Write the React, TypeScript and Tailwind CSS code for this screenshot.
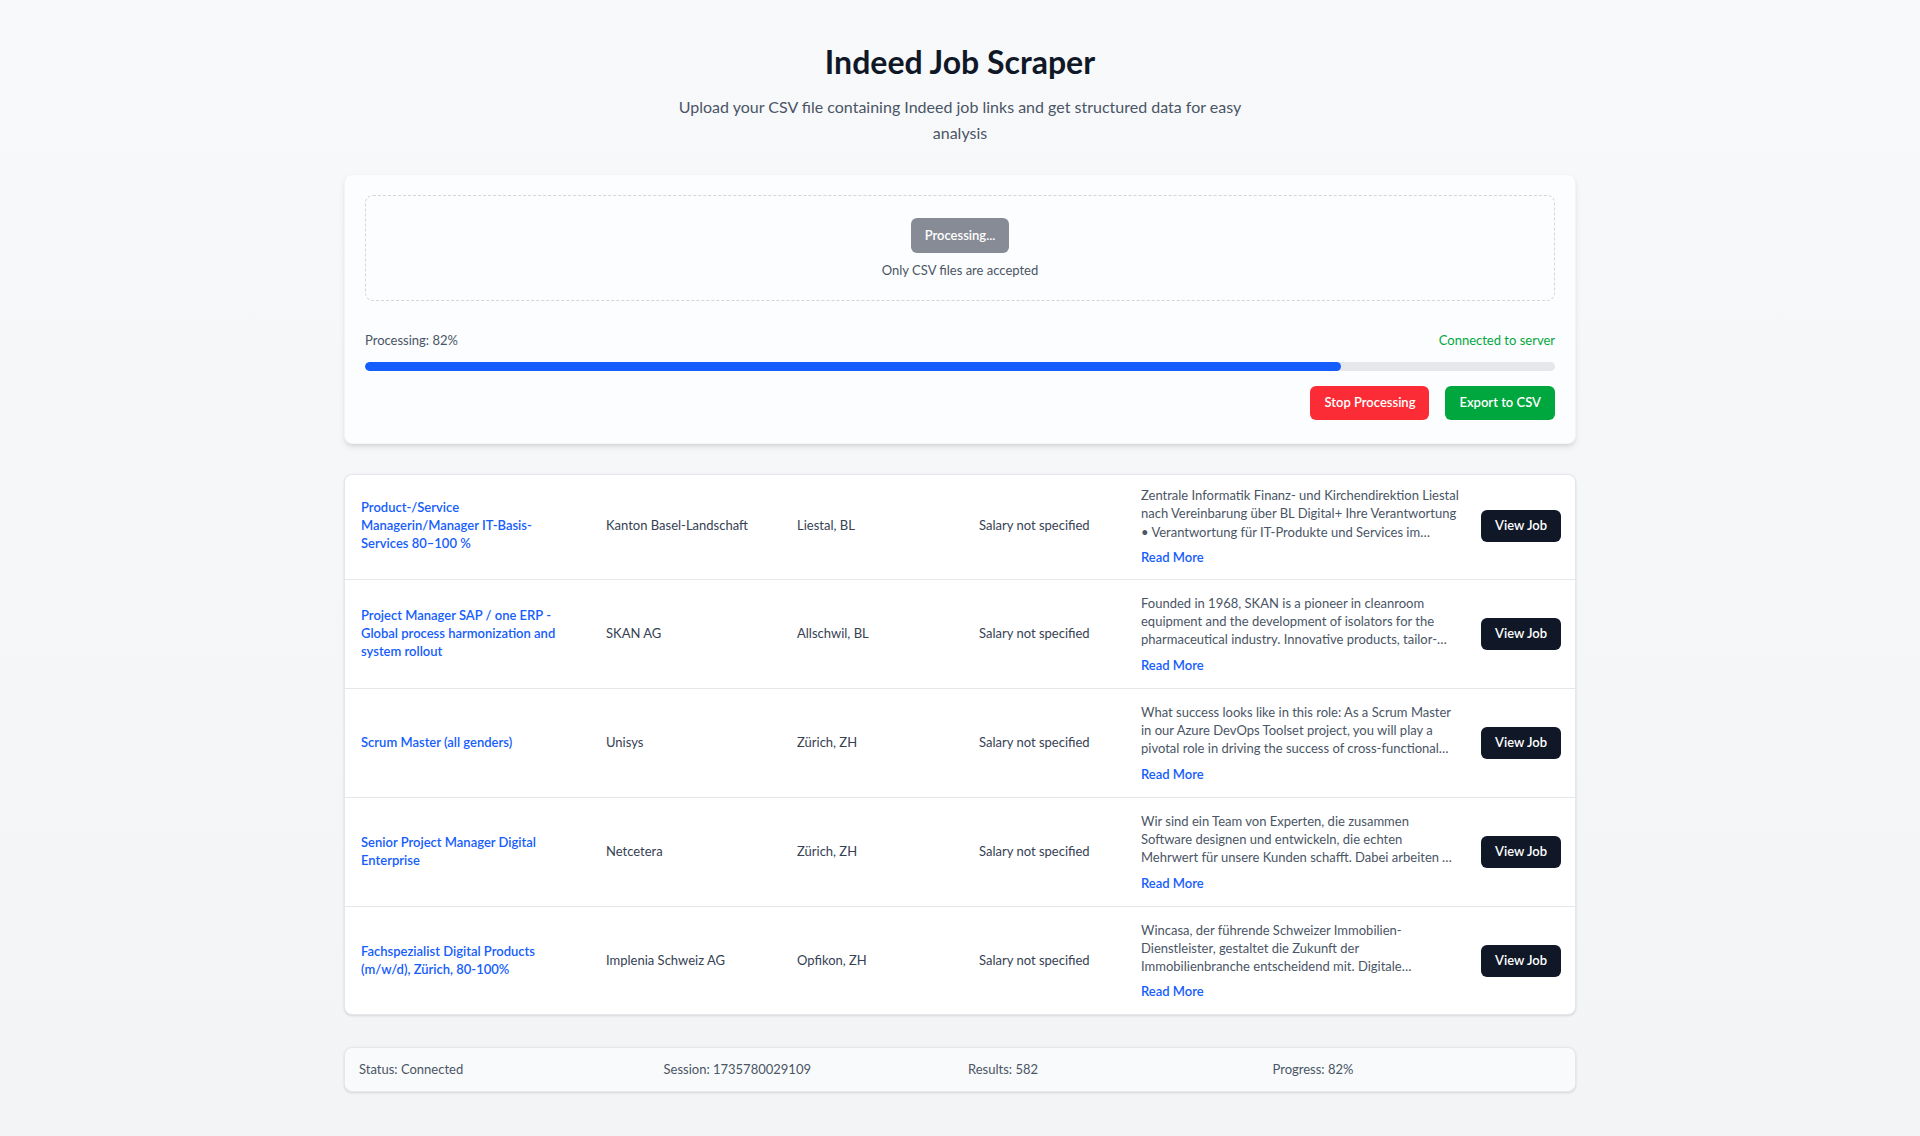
type Job = {
  title: string;
  company: string;
  location: string;
  salary: string;
  description: string;
};

const jobs: Job[] = [
  {
    title: 'Product-/Service Managerin/Manager IT-Basis-Services 80–100 %',
    company: 'Kanton Basel-Landschaft',
    location: 'Liestal, BL',
    salary: 'Salary not specified',
    description:
      'Zentrale Informatik Finanz- und Kirchendirektion Liestal nach Vereinbarung über BL Digital+ Ihre Verantwortung • Verantwortung für IT-Produkte und Services im Bereich Basis-Services sowie Weiterentwicklung der Angebote.',
  },
  {
    title: 'Project Manager SAP / one ERP - Global process harmonization and system rollout',
    company: 'SKAN AG',
    location: 'Allschwil, BL',
    salary: 'Salary not specified',
    description:
      'Founded in 1968, SKAN is a pioneer in cleanroom equipment and the development of isolators for the pharmaceutical industry. Innovative products, tailor-made solutions and a strong team spirit are what drive us.',
  },
  {
    title: 'Scrum Master (all genders)',
    company: 'Unisys',
    location: 'Zürich, ZH',
    salary: 'Salary not specified',
    description:
      'What success looks like in this role: As a Scrum Master in our Azure DevOps Toolset project, you will play a pivotal role in driving the success of cross-functional teams and agile delivery.',
  },
  {
    title: 'Senior Project Manager Digital Enterprise',
    company: 'Netcetera',
    location: 'Zürich, ZH',
    salary: 'Salary not specified',
    description:
      'Wir sind ein Team von Experten, die zusammen Software designen und entwickeln, die echten Mehrwert für unsere Kunden schafft. Dabei arbeiten wir eng mit unseren Partnern zusammen.',
  },
  {
    title: 'Fachspezialist Digital Products (m/w/d), Zürich, 80-100%',
    company: 'Implenia Schweiz AG',
    location: 'Opfikon, ZH',
    salary: 'Salary not specified',
    description:
      'Wincasa, der führende Schweizer Immobilien-Dienstleister, gestaltet die Zukunft der Immobilienbranche entscheidend mit. Digitale Transformationsprojekte stehen dabei im Zentrum.',
  },
];

const progress = 82;

function JobRow({ job, first }: { job: Job; first: boolean }) {
  return (
    <div
      className={
        first
          ? 'flex items-center px-4 pt-[11px] pb-[13px]'
          : 'flex items-center px-4 pt-[14px] pb-[14px] border-t border-gray-200'
      }
    >
      <div className="w-[245px] shrink-0 pr-[40px]">
        <a className="block text-[13px] leading-[1.38] font-semibold text-blue-600">{job.title}</a>
      </div>
      <div className="w-[191px] shrink-0 text-[13px] text-gray-700">{job.company}</div>
      <div className="w-[182px] shrink-0 text-[13px] text-gray-700">{job.location}</div>
      <div className="w-[162px] shrink-0 text-[13px] text-gray-700">{job.salary}</div>
      <div className="w-[340px] shrink-0">
        <p className="w-[321px] text-[13px] leading-[18.3px] text-gray-600 line-clamp-3">{job.description}</p>
        <button className="mt-[7px] block text-[13px] leading-[18px] font-semibold text-blue-600">
          Read More
        </button>
      </div>
      <div className="w-[80px] shrink-0">
        <button className="w-[80px] h-8 rounded-md bg-gray-900 text-white text-[13px] font-semibold">
          View Job
        </button>
      </div>
    </div>
  );
}

export default function App() {
  return (
    <div className="min-h-screen bg-gradient-to-b from-[#f8f9fb] to-[#f3f4f6] font-['Lato','Noto_Sans',sans-serif] pb-10">
      <div className="max-w-7xl mx-auto px-6 pt-[42px]">
        <header className="text-center">
          <h1 className="text-[32px] leading-[40px] font-bold text-gray-900">Indeed Job Scraper</h1>
          <p className="mt-3 max-w-xl mx-auto text-base leading-[26px] text-gray-600">
            Upload your CSV file containing Indeed job links and get structured data for easy analysis
          </p>
        </header>

        <section className="mt-[28px] bg-[#fcfdfe] rounded-lg shadow-md border border-gray-100 px-5 pt-5 pb-[23px]">
          <div className="border border-dashed border-gray-300 rounded-lg pt-[22px] pb-[22px] flex flex-col items-center">
            <button className="h-[35px] px-[14px] rounded-md bg-[#878b95] text-white text-[13px] font-semibold">
              Processing...
            </button>
            <p className="mt-[9px] text-[13px] leading-4 text-gray-600">Only CSV files are accepted</p>
          </div>

          <div className="mt-[31px]">
            <div className="flex justify-between text-[13px] leading-4">
              <span className="text-gray-600">Processing: {progress}%</span>
              <span className="text-green-600">Connected to server</span>
            </div>
            <div className="mt-[14px] h-[9px] w-full rounded-full bg-gray-200 overflow-hidden">
              <div className="h-full rounded-full bg-blue-600" style={{ width: `${progress}%` }} />
            </div>
            <div className="mt-[15px] flex justify-end gap-4">
              <button className="h-[34px] px-[14px] rounded-md bg-red-500 text-white text-[13px] font-semibold">
                Stop Processing
              </button>
              <button className="h-[34px] px-[14px] rounded-md bg-green-600 text-white text-[13px] font-semibold">
                Export to CSV
              </button>
            </div>
          </div>
        </section>

        <section className="mt-[30px] bg-white rounded-lg border border-gray-200 shadow-sm">
          {jobs.map((job, i) => (
            <JobRow key={job.title} job={job} first={i === 0} />
          ))}
        </section>

        <footer className="mt-8 h-[45px] bg-gray-50 rounded-lg border border-gray-200 shadow-sm px-[14px] grid grid-cols-4 gap-4 items-center text-[13px] text-gray-600">
          <span>Status: Connected</span>
          <span>Session: 1735780029109</span>
          <span>Results: 582</span>
          <span>Progress: {progress}%</span>
        </footer>
      </div>
    </div>
  );
}
